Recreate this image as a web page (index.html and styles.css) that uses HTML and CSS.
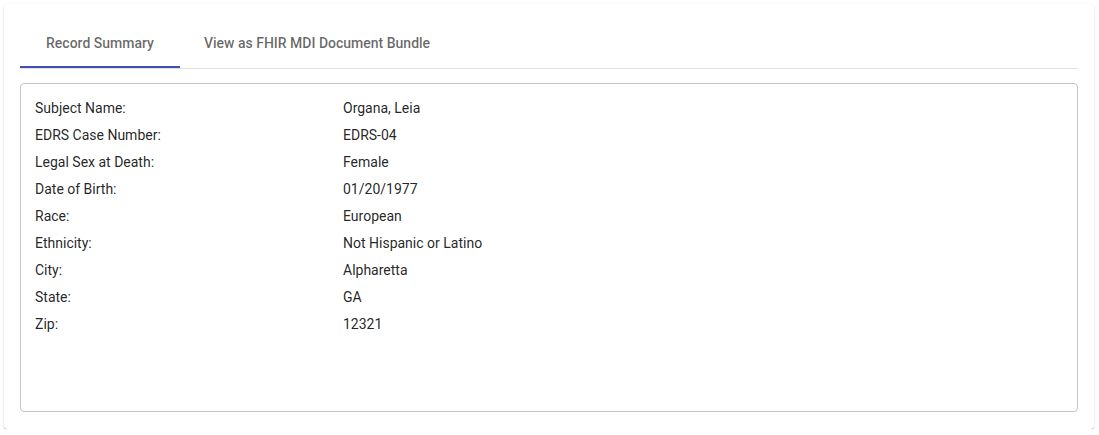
FILE: index.html
```html
<!DOCTYPE html>
<html>
<head>
<meta charset="utf-8">
<link rel="stylesheet" href="styles.css">
</head>
<body>
<div class="card">
  <div class="tabs">
    <div class="tab active">Record Summary</div>
    <div class="tab">View as FHIR MDI Document Bundle</div>
  </div>
  <div class="panel">
    <div class="row"><span class="label">Subject Name:</span><span class="value">Organa, Leia</span></div>
    <div class="row"><span class="label">EDRS Case Number:</span><span class="value">EDRS-04</span></div>
    <div class="row"><span class="label">Legal Sex at Death:</span><span class="value">Female</span></div>
    <div class="row"><span class="label">Date of Birth:</span><span class="value">01/20/1977</span></div>
    <div class="row"><span class="label">Race:</span><span class="value">European</span></div>
    <div class="row"><span class="label">Ethnicity:</span><span class="value">Not Hispanic or Latino</span></div>
    <div class="row"><span class="label">City:</span><span class="value">Alpharetta</span></div>
    <div class="row"><span class="label">State:</span><span class="value">GA</span></div>
    <div class="row"><span class="label">Zip:</span><span class="value">12321</span></div>
  </div>
</div>
</body>
</html>
```

FILE: styles.css
```css
html, body {
  margin: 0;
  padding: 0;
  background: #fff;
}
body {
  padding: 4px 5px 0 4px;
  font-family: Roboto, "Liberation Sans", sans-serif;
  font-size: 14px;
  color: rgba(0,0,0,0.87);
}
.card {
  background: #fff;
  border-radius: 4px;
  box-shadow: 0 2px 1px -1px rgba(0,0,0,.2), 0 1px 1px 0 rgba(0,0,0,.14), 0 1px 3px 0 rgba(0,0,0,.12);
  padding: 16px 16px 17px 16px;
}
.tabs {
  display: flex;
  border-bottom: 1px solid #e0e0e0;
}
.tab {
  height: 48px;
  min-width: 160px;
  box-sizing: border-box;
  padding: 0 24px;
  display: flex;
  align-items: center;
  justify-content: center;
  font-weight: 500;
  color: rgba(0,0,0,0.6);
  border-bottom: 2px solid transparent;
}
.tab.active {
  border-bottom-color: #3f51b5;
}
.panel {
  margin-top: 14px;
  border: 1px solid #c4c4c4;
  border-radius: 4px;
  height: 301px;
  padding: 10px 14px 16px 14px;
}
.row {
  display: flex;
  height: 27px;
  align-items: center;
}
.label {
  width: 308px;
}
```
